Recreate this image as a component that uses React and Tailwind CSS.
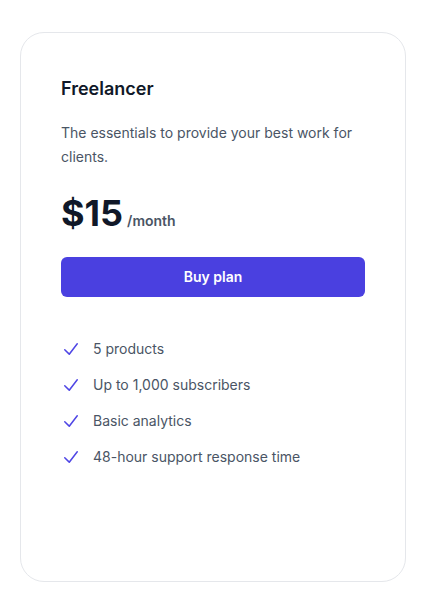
import React from "react";

function Check() {
  return (
    <svg viewBox="0 0 20 20" fill="currentColor" aria-hidden="true" className="h-6 w-5 flex-none text-[#4f46e5]">
      <path fillRule="evenodd" d="M16.704 4.153a.75.75 0 01.143 1.052l-8 10.5a.75.75 0 01-1.127.075l-4.5-4.5a.75.75 0 011.06-1.06l3.894 3.893 7.48-9.817a.75.75 0 011.05-.143z" clipRule="evenodd" />
    </svg>
  );
}

export default function App() {
  const features = ["5 products", "Up to 1,000 subscribers", "Basic analytics", "48-hour support response time"];
  return (
    <div className="min-h-[606px] w-[428px] bg-white pt-8 pl-5" style={{ fontFamily: "Inter, 'Noto Sans', sans-serif" }}>
      <div className="h-[550px] w-[386px] rounded-3xl border border-gray-200 p-10 antialiased">
        <h3 className="text-lg font-semibold leading-8 text-gray-900">Freelancer</h3>
        <p className="mt-4 text-sm leading-6 text-gray-600">The essentials to provide your best work for clients.</p>
        <p className="mt-6 flex items-baseline gap-x-1">
          <span className="text-4xl font-bold text-gray-900">$15</span>
          <span className="text-sm font-semibold leading-6 text-gray-600">/month</span>
        </p>
        <a href="#" className="mt-6 block rounded-md bg-[#4a40e0] px-3 py-2.5 text-center text-sm font-semibold leading-5 text-white">Buy plan</a>
        <ul className="mt-10 space-y-3 text-sm leading-6 text-gray-600">
          {features.map((f) => (
            <li key={f} className="flex gap-x-3">
              <Check />
              {f}
            </li>
          ))}
        </ul>
      </div>
    </div>
  );
}
